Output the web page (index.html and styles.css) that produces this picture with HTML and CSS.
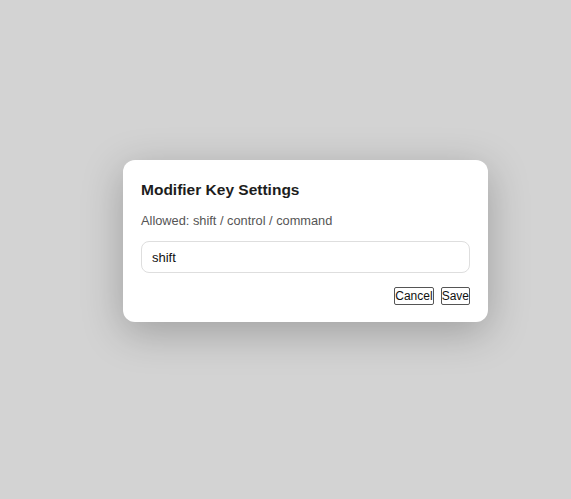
FILE: index.html
```html
<!doctype html>
<html>
	<head>
		<meta charset="utf-8"/>
		<title>Modifier Key Settings</title>
		<link rel="stylesheet" href="styles.css">
	</head>
	<body>
		<div class="dialog">
			<h2 class="title">Modifier Key Settings</h2>
			<p class="hint">Allowed: shift / control / command</p>
			<input class="key_input" type="text" value="shift">
			<div class="actions">
				<button class="btn">Cancel</button>
				<button class="btn">Save</button>
			</div>
		</div>
	</body>
</html>
```

FILE: styles.css
```css
html, body {
	height: 100%;
}
body {
	margin: 0;
	background: #d3d3d3;
	font-family: "Liberation Sans", Arial, sans-serif;
	overflow: hidden;
}
.dialog {
	width: 365px;
	box-sizing: border-box;
	margin: 160px 0 0 123px;
	padding: 20px 18px 17px 18px;
	background: #fff;
	border-radius: 12px;
	box-shadow: 0 10px 40px rgba(0, 0, 0, 0.25);
}
.title {
	margin: 0;
	font-size: 15.5px;
	font-weight: bold;
	color: #1d1d1d;
	line-height: 20px;
}
.hint {
	margin: 13px 0 0 0;
	font-size: 12.8px;
	color: #555;
	line-height: 16px;
}
.key_input {
	display: block;
	width: 100%;
	box-sizing: border-box;
	height: 32px;
	margin-top: 12px;
	padding: 0 10px;
	border: 1px solid #dedede;
	border-radius: 8px;
	font-family: "Liberation Sans", Arial, sans-serif;
	font-size: 13px;
	color: #111;
	outline: none;
}
.actions {
	display: flex;
	justify-content: flex-end;
	gap: 7px;
	margin-top: 14px;
}
.btn {
	height: 18px;
	padding: 0;
	background: #fff;
	border: 1px solid #555;
	border-radius: 2px;
	font-family: "Liberation Sans", Arial, sans-serif;
	font-size: 12px;
	color: #111;
	line-height: 16px;
}
```
